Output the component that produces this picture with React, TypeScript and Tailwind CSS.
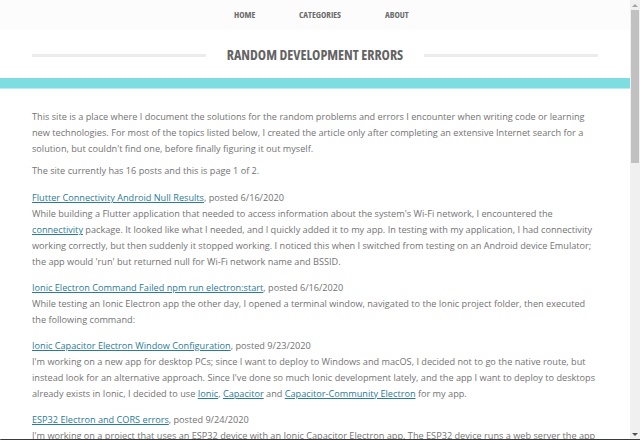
const linkCls = 'text-[#2b7b98] underline';

const posts = [
  {
    title: 'Flutter Connectivity Android Null Results',
    date: '6/16/2020',
    body: (
      <>
        While building a Flutter application that needed to access information about the system's Wi-Fi network, I encountered the{' '}
        <a href="#" className={linkCls}>connectivity</a> package. It looked like what I needed, and I quickly added it to my app. In testing with my application, I had connectivity working correctly, but then suddenly it stopped working. I noticed this when I switched from testing on an Android device Emulator; the app would 'run' but returned null for Wi-Fi network name and BSSID.
      </>
    ),
  },
  {
    title: 'Ionic Electron Command Failed npm run electron:start',
    date: '6/16/2020',
    body: (
      <>
        While testing an Ionic Electron app the other day, I opened a terminal window, navigated to the Ionic project folder, then executed the following command:
      </>
    ),
  },
  {
    title: 'Ionic Capacitor Electron Window Configuration',
    date: '9/23/2020',
    body: (
      <>
        I'm working on a new app for desktop PCs; since I want to deploy to Windows and macOS, I decided not to go the native route, but instead look for an alternative approach. Since I've done so much Ionic development lately, and the app I want to deploy to desktops already exists in Ionic, I decided to use{' '}
        <a href="#" className={linkCls}>Ionic</a>,{' '}
        <a href="#" className={linkCls}>Capacitor</a> and{' '}
        <a href="#" className={linkCls}>Capacitor-Community Electron</a> for my app.
      </>
    ),
  },
  {
    title: 'ESP32 Electron and CORS errors',
    date: '9/24/2020',
    body: (
      <>
        I'm working on a project that uses an ESP32 device with an Ionic Capacitor Electron app. The ESP32 device runs a web server the app uses to communicate with the device, and I kept getting CORS errors when the app tried to connect.
      </>
    ),
  },
];

function Scrollbar() {
  return (
    <div className="w-[10px] h-full bg-[#f0f0f0] flex flex-col items-center">
      <div className="h-[10px] flex items-center justify-center">
        <div className="w-0 h-0 border-x-[3px] border-x-transparent border-b-[3px] border-b-[#a3a3a3]" />
      </div>
      <div className="w-[8px] h-[153px] bg-[#c1c1c1]" />
      <div className="flex-1" />
      <div className="h-[10px] flex items-center justify-center">
        <div className="w-0 h-0 border-x-[3px] border-x-transparent border-t-[3px] border-t-[#505050]" />
      </div>
    </div>
  );
}

export default function App() {
  return (
    <div className="h-screen flex flex-col overflow-hidden bg-white font-['Open_Sans',sans-serif]">
      <div className="flex-1 min-h-0 flex">
        <div className="flex-1 min-w-0 overflow-hidden">
          {/* top nav */}
          <nav className="h-[30px] bg-[#fcfcfc] flex items-center justify-center pl-[12px] font-bold font-stretch-condensed text-[9px] text-[#6b6b6b]">
            <a href="#" className="w-[65px]">HOME</a>
            <a href="#" className="w-[86px]">CATEGORIES</a>
            <a href="#" className="w-[23px]">ABOUT</a>
          </nav>

          {/* site title */}
          <div className="flex items-center px-[32px] pt-[12px] pb-[10px] gap-[21px]">
            <div className="flex-1 h-[3px] bg-[#ececec]" />
            <h1 className="font-bold font-stretch-condensed text-[14px] text-[#636363] leading-[26px]">
              RANDOM DEVELOPMENT ERRORS
            </h1>
            <div className="flex-1 h-[3px] bg-[#ececec]" />
          </div>

          <div className="h-[11px] bg-[#7ddde1] border-b border-[#b5eef0]" />

          <main className="px-[32px] pt-[20px] text-[9.17px] leading-[16px] text-[#737373]">
            <p className="mb-[6px]">
              This site is a place where I document the solutions for the random problems and errors I encounter when writing code or learning new technologies. For most of the topics listed below, I created the article only after completing an extensive Internet search for a solution, but couldn't find one, before finally figuring it out myself.
            </p>
            <p className="mb-[11px]">The site currently has 16 posts and this is page 1 of 2.</p>

            {posts.map((p) => (
              <div key={p.title} className="mb-[10px]">
                <div>
                  <a href="#" className={linkCls}>{p.title}</a>, posted {p.date}
                </div>
                <p>{p.body}</p>
              </div>
            ))}
          </main>
        </div>
        <Scrollbar />
      </div>
      {/* window frame edge */}
      <div className="h-px bg-[#3a3a3a] rounded-bl-[2px]" />
    </div>
  );
}
